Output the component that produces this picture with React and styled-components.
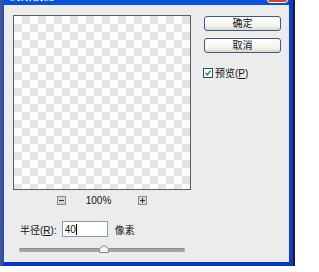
import React from 'react'
import styled, { createGlobalStyle } from 'styled-components'

const GlobalStyle = createGlobalStyle`
  html, body {
    margin: 0;
    padding: 0;
    background: #fff;
    overflow: hidden;
  }
  body {
    font-family: "Liberation Sans", "Noto Sans CJK SC", sans-serif;
    color: #111;
  }
`

const Window = styled.div`
  width: 285px;
  margin-top: -17px;
  margin-left: 2px;
  border-left: 2px solid #1d4ed6;
  border-right: 4px solid #0c3bd2;
  border-bottom: 4px solid #0a36c8;
  box-shadow: -2px 0 0 #4a5677, 2px 6px 0 #1d1d1f, -2px 6px 0 #1d1d1f;
`

const TitleBar = styled.div`
  height: 22px;
  box-sizing: border-box;
  display: flex;
  align-items: flex-end;
  justify-content: space-between;
  padding: 0 1px 2px 6px;
  background: linear-gradient(#2a6ff0, #0058e6 60%, #0a4fd8);
`

const Title = styled.span`
  color: #fff;
  font-size: 11px;
  font-weight: bold;
  line-height: 13px;
`

const CloseButton = styled.span`
  width: 19px;
  height: 19px;
  border: 1px solid #fff;
  border-radius: 3px;
  background: linear-gradient(#e87a55, #d4431c);
`

const Body = styled.div`
  height: 257px;
  box-sizing: border-box;
  display: grid;
  grid-template-columns: 178px 77px;
  column-gap: 13px;
  align-items: start;
  padding: 10px 8px 0 9px;
  background: #ececec;
`

const LeftColumn = styled.div`
  display: flex;
  flex-direction: column;
`

const Preview = styled.div`
  width: 178px;
  height: 175px;
  box-sizing: border-box;
  border: 1px solid #5e5e5e;
  background: repeating-conic-gradient(#e4e4e4 0 25%, #fdfdfd 0 50%) 0 0 / 16px 16px;
`

const ZoomRow = styled.div`
  margin-top: 6px;
  height: 9px;
  display: flex;
  align-items: center;
  justify-content: center;
`

const ZoomIcon = styled.span`
  width: 9px;
  height: 9px;
  display: flex;
  align-items: center;
  justify-content: center;
  box-sizing: border-box;
  border: 1px solid #8a8a8a;
  background: #d6d6d6;
  svg {
    display: block;
  }
`

const ZoomText = styled.span`
  font-size: 10px;
  line-height: 9px;
  margin: 0 27px 0 20px;
`

const RadiusRow = styled.div`
  margin-top: 16px;
  padding-left: 7px;
  display: flex;
  align-items: center;
  height: 16px;
  font-size: 10px;
`

const Label = styled.span`
  margin-right: 5px;
  white-space: nowrap;
`

const Key = styled.span`
  text-decoration: underline;
`

const Field = styled.div`
  width: 46px;
  height: 16px;
  box-sizing: border-box;
  border: 1px solid #7f9db9;
  background: #fff;
  padding-left: 2px;
  display: flex;
  align-items: center;
  font-size: 10px;
`

const Caret = styled.span`
  width: 1px;
  height: 11px;
  background: #000;
`

const Unit = styled.span`
  margin-left: 7px;
`

const Slider = styled.div`
  position: relative;
  margin: 8px 0 0 6px;
  width: 166px;
  height: 8px;
`

const Track = styled.div`
  margin-top: 3px;
  height: 3px;
  border-radius: 2px;
  background: #a4a4a4;
  border-top: 1px solid #8c8c8c;
`

const Thumb = styled.svg`
  position: absolute;
  top: 0;
  display: block;
`

const RightColumn = styled.div`
  display: flex;
  flex-direction: column;
  padding-top: 1px;
`

const Button = styled.div`
  height: 15px;
  box-sizing: border-box;
  margin-bottom: 7px;
  border: 1px solid #3d5a86;
  border-radius: 3px;
  background: linear-gradient(#ffffff, #f2f2ee 70%, #d9d9d2);
  display: flex;
  align-items: center;
  justify-content: center;
  font-size: 10px;
  line-height: 1;
`

const CheckRow = styled.label`
  margin: 5px 0 0 -1px;
  display: flex;
  align-items: center;
  gap: 2px;
  font-size: 10px;
`

const Box = styled.span`
  width: 10px;
  height: 10px;
  box-sizing: border-box;
  border: 1px solid #1c5180;
  background: #fff;
  display: flex;
  svg {
    display: block;
  }
`

const App = () => {
  const radius = 40
  const thumbLeft = 80

  return (
    <>
      <GlobalStyle />
      <Window>
        <TitleBar>
          <Title>高斯模糊</Title>
          <CloseButton />
        </TitleBar>
        <Body>
          <LeftColumn>
            <Preview />
            <ZoomRow>
              <ZoomIcon>
                <svg width="5" height="5" viewBox="0 0 5 5">
                  <rect x="0" y="2" width="5" height="1" fill="#333" />
                </svg>
              </ZoomIcon>
              <ZoomText>100%</ZoomText>
              <ZoomIcon>
                <svg width="5" height="5" viewBox="0 0 5 5">
                  <rect x="0" y="2" width="5" height="1" fill="#333" />
                  <rect x="2" y="0" width="1" height="5" fill="#333" />
                </svg>
              </ZoomIcon>
            </ZoomRow>
            <RadiusRow>
              <Label>半径(<Key>R</Key>):</Label>
              <Field>
                {radius}
                <Caret />
              </Field>
              <Unit>像素</Unit>
            </RadiusRow>
            <Slider>
              <Track />
              <Thumb width="10" height="8" viewBox="0 0 10 8" style={{ left: thumbLeft }}>
                <path d="M0.5 7.5 V3.5 L5 0.5 L9.5 3.5 V7.5 Z" fill="#f8f8f8" stroke="#8a8a8a" />
              </Thumb>
            </Slider>
          </LeftColumn>
          <RightColumn>
            <Button>确定</Button>
            <Button>取消</Button>
            <CheckRow>
              <Box>
                <svg width="8" height="8" viewBox="0 0 8 8">
                  <path d="M1.5 4 L3.2 5.8 L6.6 1.8" fill="none" stroke="#21a121" strokeWidth="1.6" />
                </svg>
              </Box>
              <span>预览(<Key>P</Key>)</span>
            </CheckRow>
          </RightColumn>
        </Body>
      </Window>
    </>
  )
}

export default App
